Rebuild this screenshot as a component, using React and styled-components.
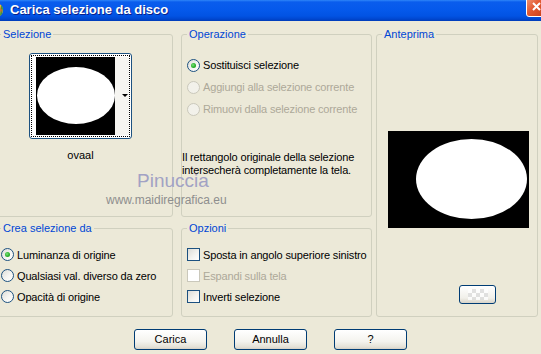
import React from 'react'
import styled, { createGlobalStyle } from 'styled-components'

const GlobalStyle = createGlobalStyle`
  html, body {
    margin: 0;
    padding: 0;
    background: #ECE9D8;
  }
  body {
    font-family: "Liberation Sans", Arial, sans-serif;
    font-size: 11px;
    color: #000;
  }
`

const Window = styled.div`
  position: relative;
  width: 541px;
  height: 354px;
  overflow: hidden;
  background: #ECE9D8;
`

const TitleBar = styled.div`
  height: 21px;
  display: flex;
  align-items: flex-start;
  overflow: hidden;
  background: linear-gradient(to bottom, #2f86f8 0px, #0a5ded 2px, #0559eb 10px, #0253e3 16px, #0047d0 19px, #003cb8 21px);
`

const AppIcon = styled.svg`
  margin: 2px 6px 0 -12px;
  flex: none;
`

const Title = styled.span`
  margin-top: 2px;
  color: #fff;
  font-family: "Liberation Sans", Arial, sans-serif;
  font-weight: bold;
  font-size: 13px;
  line-height: 15px;
  text-shadow: 1px 1px 0 #0a1f8a;
`

const CloseBtn = styled.div`
  margin: -4px -6px 0 auto;
  width: 21px;
  height: 21px;
  flex: none;
  box-sizing: border-box;
  border: 1px solid #fff;
  border-radius: 3px;
  background: linear-gradient(135deg, #f09a7c 0%, #e35a32 45%, #c63b16 100%);
  display: flex;
  align-items: center;
  justify-content: center;
`

const Content = styled.div`
  display: grid;
  grid-template-columns: 178px 8px 191px 4px 162px;
  grid-template-rows: 183px 89px;
  row-gap: 11px;
  margin: 13px 0 0 -5px;
`

const Group = styled.div`
  position: relative;
  box-sizing: border-box;
  grid-column: ${p => p.col};
  grid-row: ${p => p.row};
  border: 1px solid #D0D0BF;
  border-radius: 3px;
  display: flex;
  flex-direction: column;
  padding: ${p => p.pad};
`

const Legend = styled.span`
  position: absolute;
  top: -7px;
  left: 5px;
  padding: 0 2px;
  line-height: 13px;
  background: #ECE9D8;
  color: #0046D5;
`

const ThumbWrap = styled.div`
  width: 103px;
  display: flex;
  flex-direction: column;
  align-items: center;
`

const Thumb = styled.div`
  width: 103px;
  height: 86px;
  box-sizing: border-box;
  border: 1px solid #1C5180;
  border-radius: 3px;
  padding: 1px;
  background: #fff;
`

const Focus = styled.div`
  height: 100%;
  box-sizing: border-box;
  border: 1px dotted #000;
  padding: 1px 0 1px 4px;
  display: flex;
`

const DropStrip = styled.div`
  flex: 1;
  background: #f6f5f1;
  display: flex;
  align-items: center;
  justify-content: flex-end;
  padding-right: 1px;
  padding-bottom: 2px;
`

const Arrow = styled.div`
  width: 0;
  height: 0;
  border-left: 3px solid transparent;
  border-right: 3px solid transparent;
  border-top: 3px solid #000;
`

const Caption = styled.div`
  margin-top: 10px;
  line-height: 13px;
`

const Row = styled.div`
  height: ${p => p.h || 21}px;
  display: flex;
  align-items: center;
  white-space: nowrap;
  letter-spacing: -0.15px;
  color: ${p => (p.disabled ? '#ACA899' : '#000')};
`

const Radio = styled.span`
  width: 13px;
  height: 13px;
  box-sizing: border-box;
  border-radius: 50%;
  border: 1px solid ${p => (p.disabled ? '#CAC8BB' : '#1C5180')};
  background: ${p => (p.disabled ? '#F2F1EA' : 'linear-gradient(135deg, #DCDCD7 0%, #F5F5F2 55%, #FFFFFF 100%)')};
  margin-right: 3px;
  flex: none;
  display: flex;
  align-items: center;
  justify-content: center;
  &::after {
    content: '';
    display: ${p => (p.checked ? 'block' : 'none')};
    width: 5px;
    height: 5px;
    border-radius: 50%;
    background: radial-gradient(circle at 40% 40%, #7ee07e 0%, #2fb52f 50%, #1a8a1a 100%);
  }
`

const Check = styled.span`
  width: 13px;
  height: 13px;
  box-sizing: border-box;
  border: 1px solid ${p => (p.disabled ? '#CAC8BB' : '#1C5180')};
  background: ${p => (p.disabled ? '#FFFFFF' : 'linear-gradient(135deg, #DCDCD7 0%, #F3F3EF 55%, #FFFFFF 100%)')};
  margin-right: 3px;
  flex: none;
`

const Info = styled.div`
  margin-top: 31px;
  margin-left: -5px;
  line-height: 13px;
  letter-spacing: -0.15px;
`

const Preview = styled.svg`
  display: block;
  margin-top: 96px;
`

const SmallBtn = styled.div`
  margin: 57px 0 0 71px;
  width: 37px;
  height: 19px;
  box-sizing: border-box;
  border: 1px solid #003C74;
  border-radius: 3px;
  background: linear-gradient(to bottom, #ffffff 0%, #f1f0ea 70%, #d8d4c8 100%);
  display: flex;
  align-items: center;
  justify-content: center;
`

const Checker = styled.div`
  width: 20px;
  height: 11px;
  background-color: #fff;
  background-image:
    linear-gradient(45deg, #dcdcdc 25%, transparent 25%, transparent 75%, #dcdcdc 75%),
    linear-gradient(45deg, #dcdcdc 25%, transparent 25%, transparent 75%, #dcdcdc 75%);
  background-size: 8px 8px;
  background-position: 0 0, 4px 4px;
  opacity: 0.8;
`

const ButtonRow = styled.div`
  display: flex;
  justify-content: center;
  gap: 27px;
  margin-top: 12px;
`

const Button = styled.div`
  width: 73px;
  height: 21px;
  box-sizing: border-box;
  border: 1px solid #003C74;
  border-radius: 3px;
  background: linear-gradient(to bottom, #ffffff 0%, #f4f3ee 60%, #e4e1d6 90%, #d6d0c5 100%);
  display: flex;
  align-items: center;
  justify-content: center;
  line-height: 13px;
`

const Watermark = styled.div`
  position: absolute;
  left: ${p => p.x}px;
  top: ${p => p.y}px;
  font-family: "Liberation Sans", Arial, sans-serif;
  font-size: ${p => p.size}px;
  line-height: 1;
  color: ${p => p.color};
  white-space: nowrap;
  pointer-events: none;
`

const RadioRow = ({ label, checked, disabled, h }) => (
  <Row disabled={disabled} h={h}>
    <Radio checked={checked} disabled={disabled} />
    {label}
  </Row>
)

const CheckRow = ({ label, disabled, h }) => (
  <Row disabled={disabled} h={h}>
    <Check disabled={disabled} />
    {label}
  </Row>
)

export default function App() {
  return (
    <Window>
      <GlobalStyle />
      <TitleBar>
        <AppIcon width="16" height="16" viewBox="0 0 16 16">
          <circle cx="8" cy="8" r="7" fill="#f2b33d" />
          <path d="M13 3 L15 6 L14 12 L12 14 Z" fill="#3c9a3c" />
          <path d="M12 5 L14 8 L13 11 Z" fill="#e8562a" />
        </AppIcon>
        <Title>Carica selezione da disco</Title>
        <CloseBtn>
          <svg width="11" height="11" viewBox="0 0 11 11">
            <path d="M2 2 L9 9 M9 2 L2 9" stroke="#fff" strokeWidth="2" />
          </svg>
        </CloseBtn>
      </TitleBar>

      <Content>
        <Group col="1" row="1" pad="18px 0 0 33px">
          <Legend>Selezione</Legend>
          <ThumbWrap>
            <Thumb>
              <Focus>
                <svg width="79" height="78" viewBox="0 0 79 78">
                  <rect width="79" height="78" fill="#000" />
                  <ellipse cx="40" cy="38.5" rx="39" ry="28.5" fill="#fff" />
                </svg>
                <DropStrip>
                  <Arrow />
                </DropStrip>
              </Focus>
            </Thumb>
            <Caption>ovaal</Caption>
          </ThumbWrap>
        </Group>

        <Group col="3" row="1" pad="19px 0 0 5px">
          <Legend>Operazione</Legend>
          <RadioRow label="Sostituisci selezione" checked h={22} />
          <RadioRow label="Aggiungi alla selezione corrente" disabled h={22} />
          <RadioRow label="Rimuovi dalla selezione corrente" disabled h={22} />
          <Info>
            Il rettangolo originale della selezione
            <br />
            intersecherà completamente la tela.
          </Info>
        </Group>

        <Group col="5" row="1 / 3" pad="0 0 0 11px">
          <Legend>Anteprima</Legend>
          <Preview width="141" height="97" viewBox="0 0 141 97">
            <rect width="141" height="97" fill="#000" />
            <ellipse cx="83.5" cy="48" rx="55.5" ry="40" fill="#fff" />
          </Preview>
          <SmallBtn>
            <Checker />
          </SmallBtn>
        </Group>

        <Group col="1" row="2" pad="15px 0 0 5px">
          <Legend>Crea selezione da</Legend>
          <RadioRow label="Luminanza di origine" checked />
          <RadioRow label="Qualsiasi val. diverso da zero" />
          <RadioRow label="Opacità di origine" />
        </Group>

        <Group col="3" row="2" pad="15px 0 0 5px">
          <Legend>Opzioni</Legend>
          <CheckRow label="Sposta in angolo superiore sinistro" />
          <CheckRow label="Espandi sulla tela" disabled />
          <CheckRow label="Inverti selezione" />
        </Group>
      </Content>

      <ButtonRow>
        <Button>Carica</Button>
        <Button>Annulla</Button>
        <Button>?</Button>
      </ButtonRow>

      <Watermark x={137} y={171} size={19} color="#a2a2c4">Pinuccia</Watermark>
      <Watermark x={106} y={194} size={12} color="#8e8e8e">www.maidiregrafica.eu</Watermark>
    </Window>
  )
}
